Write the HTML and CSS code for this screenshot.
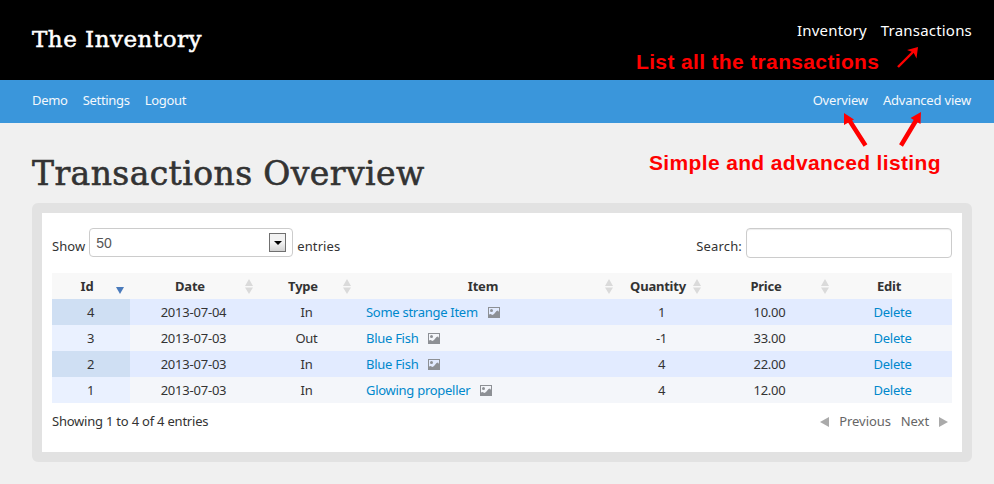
FILE: index.html
```html
<!DOCTYPE html>
<html lang="en">
<head>
<meta charset="utf-8">
<title>The Inventory</title>
<link rel="stylesheet" href="styles.css">
</head>
<body>
<svg class="defs" width="0" height="0" aria-hidden="true">
  <symbol id="picture" viewBox="0 0 12 11"><path fill="#8d9095" fill-rule="evenodd" d="M0 0h12v11H0zM1 1v6.500l1.500-.5 2 1 1.500-1 2.500-3L10 3.500l1 1.500V1z"/><circle cx="3.500" cy="3.500" r="1.500" fill="#8d9095"/></symbol>
  <symbol id="sort" viewBox="0 0 8 16"><path fill="#dadada" d="M4 0l4 7H0zM0 8.500h8l-4 6.500z"/></symbol>
</svg>
<header class="top">
  <a class="brand">The Inventory</a>
  <nav class="main-nav"><a>Inventory</a><a>Transactions</a></nav>
</header>
<div class="bar">
  <nav class="links"><a>Demo</a><a>Settings</a><a>Logout</a></nav>
  <nav class="links"><a>Overview</a><a>Advanced view</a></nav>
</div>
<main class="page">
  <h1>Transactions Overview</h1>
  <section class="panel">
    <div class="tools">
      <div class="length"><span class="lbl">Show</span><div class="select"><span>50</span><i class="drop"></i></div><span class="lbl">entries</span></div>
      <div class="search"><span class="lbl">Search:</span><input type="text" aria-label="Search"></div>
    </div>
    <table>
      <colgroup><col class="c1"><col class="c2"><col class="c3"><col class="c4"><col class="c5"><col class="c6"><col class="c7"></colgroup>
      <thead><tr>
        <th>Id<i class="desc"></i></th>
        <th>Date<svg class="sort"><use href="#sort"/></svg></th>
        <th>Type<svg class="sort"><use href="#sort"/></svg></th>
        <th>Item<svg class="sort"><use href="#sort"/></svg></th>
        <th>Quantity<svg class="sort"><use href="#sort"/></svg></th>
        <th>Price<svg class="sort"><use href="#sort"/></svg></th>
        <th>Edit</th>
      </tr></thead>
      <tbody>
        <tr><td>4</td><td>2013-07-04</td><td>In</td><td class="item"><a>Some strange Item</a><svg class="pic"><use href="#picture"/></svg></td><td>1</td><td>10.00</td><td><a>Delete</a></td></tr>
        <tr><td>3</td><td>2013-07-03</td><td>Out</td><td class="item"><a>Blue Fish</a><svg class="pic"><use href="#picture"/></svg></td><td>-1</td><td>33.00</td><td><a>Delete</a></td></tr>
        <tr><td>2</td><td>2013-07-03</td><td>In</td><td class="item"><a>Blue Fish</a><svg class="pic"><use href="#picture"/></svg></td><td>4</td><td>22.00</td><td><a>Delete</a></td></tr>
        <tr><td>1</td><td>2013-07-03</td><td>In</td><td class="item"><a>Glowing propeller</a><svg class="pic"><use href="#picture"/></svg></td><td>4</td><td>12.00</td><td><a>Delete</a></td></tr>
      </tbody>
    </table>
    <div class="foot">
      <span>Showing 1 to 4 of 4 entries</span>
      <div class="pager"><i class="prev"></i><span>Previous</span><span>Next</span><i class="next"></i></div>
    </div>
  </section>
</main>
<div class="note note-list">List all the transactions</div>
<div class="note note-views">Simple and advanced listing</div>
<svg class="arrows" viewBox="0 0 994 484" aria-hidden="true">
  <path stroke="red" stroke-width="2.400" d="M898 67L914 51"/>
  <path fill="red" d="M918 47l-11 3 6.500 2.500 3 6z"/>
  <path stroke="red" stroke-width="4.500" d="M865.500 145.500L848.500 119M901 145.500L917.500 118"/>
  <path fill="red" d="M844 113l0 12 10-5.500zM921 112l-10.500 6 10 6z"/>
</svg>
</body>
</html>
```
FILE: styles.css
```css
* { box-sizing: border-box; }
body { margin: 0; width: 994px; height: 484px; overflow: hidden; position: relative; background: #f0f0f0; color: #333; font: 13px/20px "Noto Sans", sans-serif; letter-spacing: -0.22px; }
.defs { position: absolute; }
.top { height: 80px; background: #000; color: #fff; display: flex; justify-content: space-between; padding: 0 22px 0 32px; }
.brand { font: 23px/30px "DejaVu Serif", serif; letter-spacing: 0.5px; margin-top: 24px; white-space: nowrap; -webkit-text-stroke: 0.5px; }
.main-nav { display: flex; gap: 14px; margin-top: 20px; font-size: 15px; letter-spacing: 0.2px; }
.bar { height: 43px; background: #3a96db; color: #f4f8fc; display: flex; justify-content: space-between; padding: 10px 23px 0 32px; }
.links { display: flex; gap: 15px; letter-spacing: -0.3px; }
.links + .links { letter-spacing: -0.18px; }
.page { padding: 31px 22px 0 32px; }
h1 { margin: 0 0 9px; font: 33px/40px "DejaVu Serif", serif; letter-spacing: 0.4px; white-space: nowrap; -webkit-text-stroke: 0.6px; }
.panel { height: 259px; border: 10px solid #e2e2e2; border-radius: 6px; background: #fff; padding: 15px 10px 0; }
.tools { display: flex; justify-content: space-between; height: 45px; }
.length, .search { display: flex; gap: 4px; }
.lbl { margin-top: 8px; white-space: nowrap; letter-spacing: 0.08px; }
.select { width: 204px; height: 29px; border: 1px solid #ccc; border-radius: 4px; display: flex; justify-content: space-between; padding: 4px 6px; color: #555; font: 14px/20px "Liberation Sans", sans-serif; letter-spacing: 0; }
.drop { width: 17px; height: 19px; border: 1px solid #707070; background: linear-gradient(#f2f2f2 50%, #d2d2d2); display: grid; place-items: center; }
.drop::after { content: ""; border: 4px solid transparent; border-top-color: #000; border-bottom: 0; }
.search input { width: 206px; height: 30px; border: 1px solid #ccc; border-radius: 4px; background: #fff; box-shadow: inset 0 1px 1px rgba(0,0,0,.075); }
.search .lbl { letter-spacing: 0.15px; }
table { width: 900px; table-layout: fixed; border-collapse: collapse; text-align: center; }
.c1 { width: 78px; } .c2 { width: 128px; } .c3 { width: 98px; } .c4 { width: 262px; } .c5 { width: 88px; } .c6 { width: 128px; } .c7 { width: 118px; }
tr { height: 26px; }
th { position: relative; background: #f8f8f8; padding: 3px 18px 3px 10px; }
td { padding: 3px 11px 3px 10px; white-space: nowrap; }
tbody tr { background: #f4f6fa; }
tbody tr:nth-child(odd) { background: #e2ebff; }
tbody td:first-child { background: #eaf1ff; }
tbody tr:nth-child(odd) td:first-child { background: #cfdff3; }
.sort { position: absolute; right: 5.5px; top: 6px; width: 8px; height: 16px; }
.desc { position: absolute; right: 6px; top: 14px; border: 4px solid transparent; border-top: 7px solid #4a7abb; border-bottom: 0; }
td a { color: #0088cc; }
.item { text-align: left; letter-spacing: -0.28px; }
.pic { width: 12px; height: 11px; margin-left: 10px; vertical-align: -1px; }
.foot { display: flex; justify-content: space-between; padding-top: 8px; }
.pager { display: flex; gap: 10px; padding-right: 4px; color: #666; letter-spacing: -0.08px; }
.prev, .next { margin-top: 6px; height: 10px; border: 5px solid transparent; }
.prev { border-right: 9px solid #aaa; border-left: 0; }
.next { border-left: 9px solid #aaa; border-right: 0; }
.note { position: absolute; color: red; font: bold 21px/24px "Liberation Sans", sans-serif; letter-spacing: 0.35px; white-space: nowrap; }
.note-list { left: 636px; top: 50px; }
.note-views { left: 649px; top: 151px; }
.arrows { position: absolute; left: 0; top: 0; width: 994px; height: 484px; pointer-events: none; }
```
